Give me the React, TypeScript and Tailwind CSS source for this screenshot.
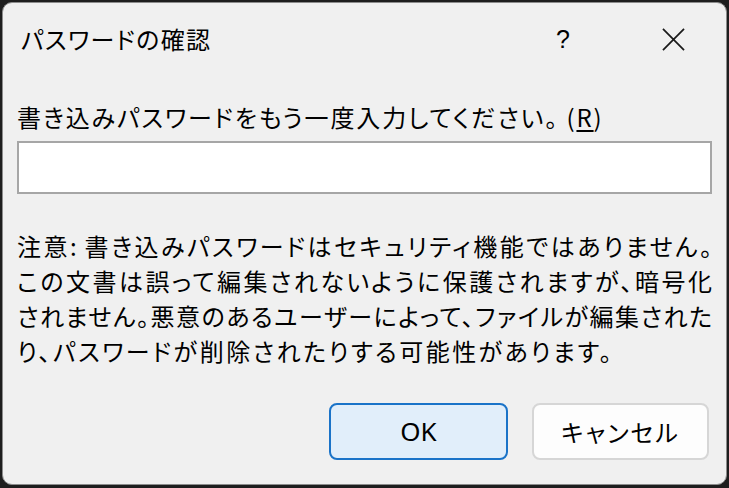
import React from "react";

const jp = "font-['Noto_Sans_CJK_JP','Noto_Sans',sans-serif]";

export default function App() {
  return (
    <div className="w-[729px] h-[488px] bg-[#1e1e1e] pt-[2px] px-[2px] pb-[3px]">
      <div className={`h-full rounded-[10px] border border-[#8c8c8c] bg-[#f0f0f0] flex flex-col text-black ${jp} [font-feature-settings:'palt']`}>
        {/* title bar */}
        <div className="h-[72px] flex items-center pl-[18px] pr-[41px] shrink-0">
          <div className="text-[24px] leading-[30px] tracking-[1.4px] flex-1">パスワードの確認</div>
          <div className="w-[20px] text-center font-['Liberation_Sans',sans-serif] text-[25px] leading-[30px] mr-[89px]">?</div>
          <svg width="23" height="23" viewBox="0 0 24 24" className="mt-[1px]">
            <path d="M1 1 L23 23 M23 1 L1 23" stroke="#1a1a1a" strokeWidth="1.8" fill="none" />
          </svg>
        </div>
        {/* body */}
        <div className="pl-[14px] pr-[14px] flex flex-col">
          <div className="mt-[27px] text-[24px] leading-[30px] tracking-[1.9px] whitespace-nowrap">
            書き込みパスワードをもう一度入力してください。 (<span className="underline underline-offset-[3px]">R</span>)
          </div>
          <div className="mt-[9px] h-[53px] bg-white border-2 border-[#a6a6a6]"></div>
          <div className="mt-[34px] text-[24px] leading-[35px] whitespace-nowrap">
            <div className="text-justify [text-align-last:justify] [text-justify:inter-character]">注意: 書き込みパスワードはセキュリティ機能ではありません。</div>
            <div className="text-justify [text-align-last:justify] [text-justify:inter-character]">この文書は誤って編集されないように保護されますが、暗号化</div>
            <div className="text-justify [text-align-last:justify] [text-justify:inter-character]">されません。悪意のあるユーザーによって、ファイルが編集された</div>
            <div className="tracking-[2.5px]">り、パスワードが削除されたりする可能性があります。</div>
          </div>
          <div className="mt-[35px] flex justify-end gap-[24px] pr-[3px]">
            <button className="w-[179px] h-[57px] rounded-[8px] border-2 border-[#1a73c8] bg-[#e1eefa] text-[26px] font-['Noto_Sans',sans-serif]">
              OK
            </button>
            <button className="w-[177px] h-[57px] rounded-[8px] border-2 border-[#d6d6d6] bg-[#fdfdfd] text-[24px] tracking-[2px]">
              キャンセル
            </button>
          </div>
        </div>
      </div>
    </div>
  );
}
